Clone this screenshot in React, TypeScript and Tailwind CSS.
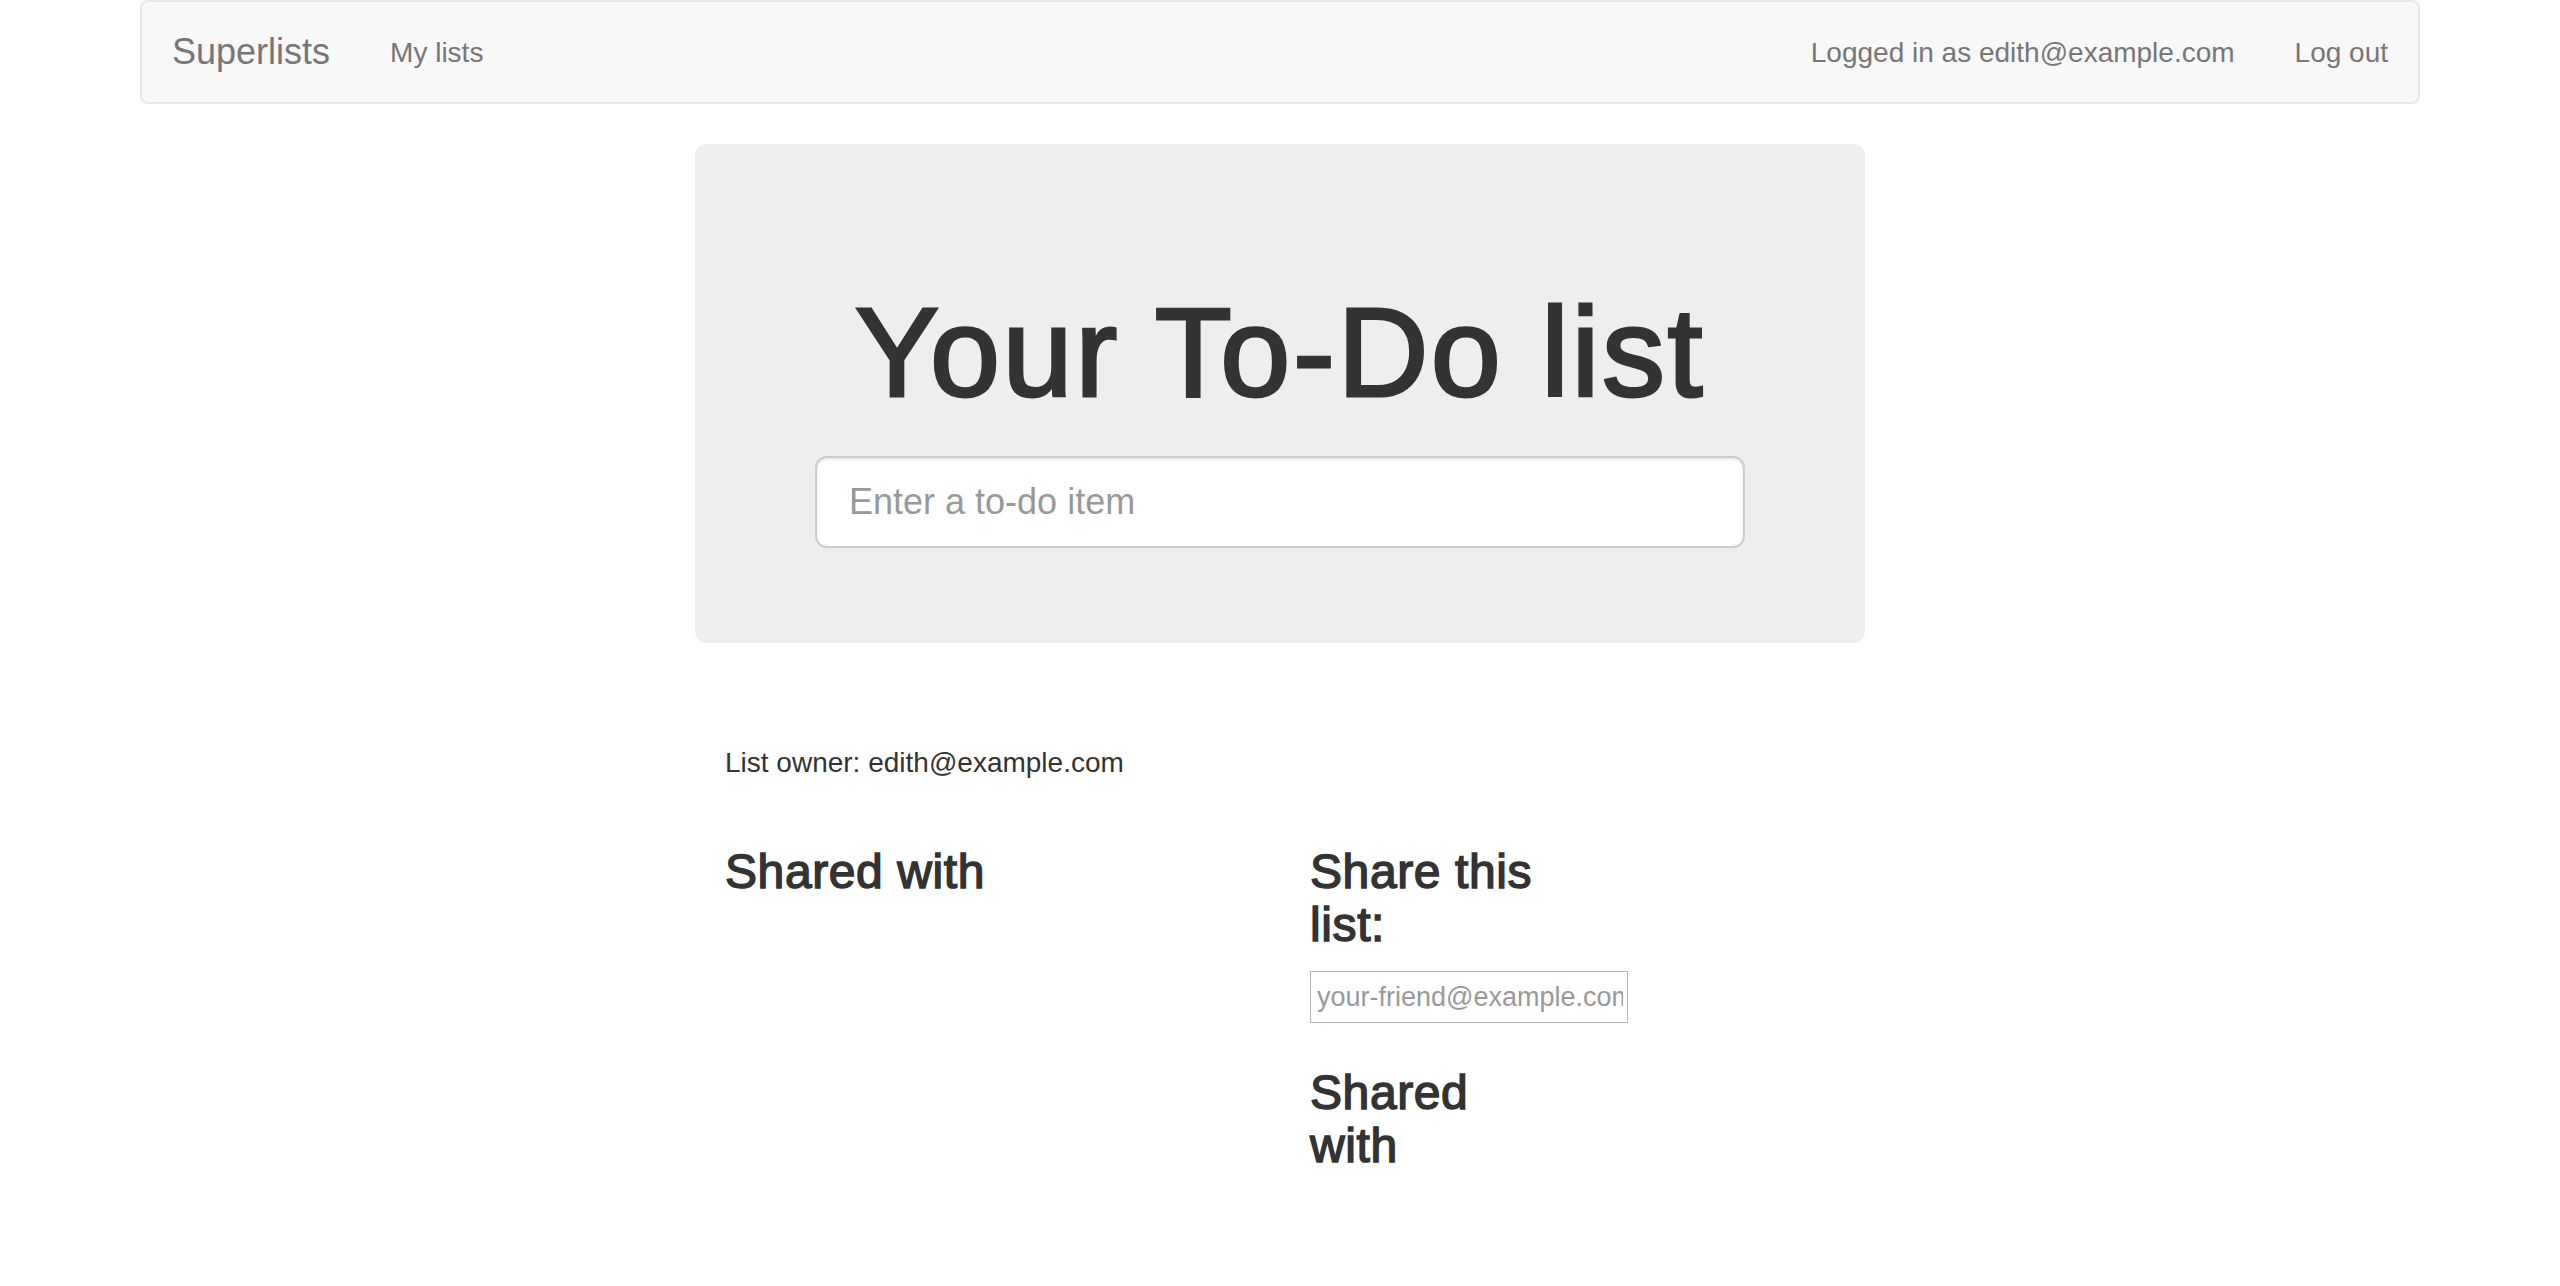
import React from "react";

export default function App() {
  return (
    <div className="min-h-[1286px] bg-white font-['Liberation_Sans',Arial,Helvetica,sans-serif] text-[#333]">
      <div className="w-[2340px] mx-auto px-[30px]">
        <nav className="h-[104px] border-2 border-[#e7e7e7] bg-[#f8f8f8] rounded-[8px] flex items-start justify-between">
          <div className="flex items-start">
            <a className="px-[30px] pt-[30px] text-[36px] leading-[40px] text-[#777]">Superlists</a>
            <a className="px-[30px] pt-[31px] text-[28px] leading-[40px] text-[#777]">My lists</a>
          </div>
          <div className="flex items-start">
            <span className="px-[30px] pt-[31px] text-[28px] leading-[40px] text-[#777]">
              Logged in as edith@example.com
            </span>
            <a className="px-[30px] pt-[31px] text-[28px] leading-[40px] text-[#777]">Log out</a>
          </div>
        </nav>
      </div>

      <div className="w-[1170px] mx-auto mt-[40px] bg-[#eeeeee] rounded-[12px] px-[120px] pt-[97px] pb-[95px]">
        <h1 className="mt-[43px] mb-[34px] text-center text-[126px] leading-[138px] tracking-[2.5px] text-[#333] font-normal [-webkit-text-stroke:3px_#333]">
          Your To-Do list
        </h1>
        <input
          className="block w-full h-[92px] border-2 border-[#cccccc] rounded-[12px] bg-white px-[32px] text-[36px] text-[#555] placeholder:text-[#999] shadow-[inset_0_2px_2px_rgba(0,0,0,0.075)] outline-none"
          placeholder="Enter a to-do item"
        />
      </div>

      <div className="w-[1170px] mx-auto px-[30px] mt-[100px]">
        <p className="text-[28px] leading-[40px] mb-[20px] text-[#333]">List owner: edith@example.com</p>
        <div className="flex items-start">
          <div className="w-[585px] shrink-0">
            <h3 className="mt-[42px] mb-[20px] text-[48px] leading-[53px] tracking-[0.6px] text-[#333] [-webkit-text-stroke:1.5px_#333]">
              Shared with
            </h3>
          </div>
          <div className="w-[232px] shrink-0">
            <h3 className="mt-[42px] mb-[20px] text-[48px] leading-[53px] tracking-[0.6px] text-[#333] [-webkit-text-stroke:1.5px_#333]">
              Share this list:
            </h3>
            <form>
              <input
                className="block w-[318px] h-[52px] border border-[#b5b5b5] bg-white pl-[6px] pr-[4px] text-[27px] text-[#333] placeholder:text-[#999] outline-none"
                placeholder="your-friend@example.com"
              />
            </form>
            <h3 className="mt-[43px] mb-[20px] text-[48px] leading-[53px] tracking-[0.6px] text-[#333] [-webkit-text-stroke:1.5px_#333]">
              Shared with
            </h3>
          </div>
        </div>
      </div>
    </div>
  );
}
